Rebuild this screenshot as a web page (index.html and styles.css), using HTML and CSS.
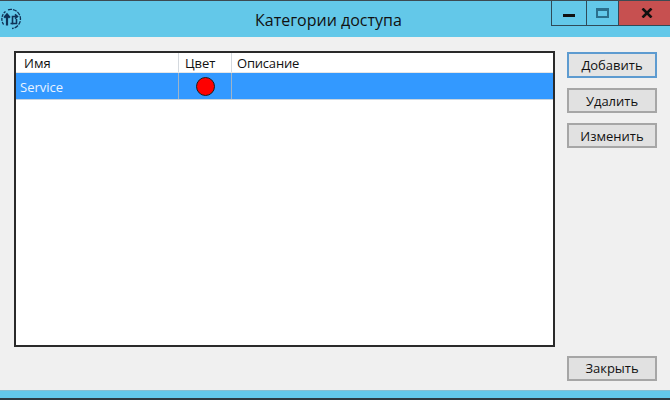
FILE: index.html
```html
<!DOCTYPE html>
<html lang="ru">
<head>
<meta charset="utf-8">
<title>Категории доступа</title>
<link rel="stylesheet" href="styles.css">
</head>
<body>
<div class="window">
  <header class="titlebar">
    <svg class="app-icon" width="22" height="22" viewBox="0 0 22 22" fill="none" stroke="#0f3358">
      <path d="M3.6 16.5 A9.5 9.5 0 0 1 5.5 3.5" stroke-width="1.3" stroke-dasharray="3 1"/>
      <path d="M8 1.8 A9.5 9.5 0 0 1 20.4 10 A9.5 9.5 0 0 1 12 20.5" stroke-width="1.3" stroke-dasharray="4 1"/>
      <path d="M7 17.5V7.5M4.2 9.8 7 6.5l2.8 3.3" stroke-width="2.2"/>
      <path d="M12.5 16.5V8.5H17M15 6.3 17.5 8.5 15 10.7M10.5 15.5h6V11" stroke-width="1.6"/>
    </svg>
    <h1 class="title">Категории доступа</h1>
    <div class="controls">
      <div class="ctl"><span class="min"></span></div>
      <div class="ctl narrow"><span class="max"></span></div>
      <div class="ctl close"><svg width="12" height="10" viewBox="0 0 12 10"><path d="M1.5 .5 10.5 9.5M10.5 .5 1.5 9.5" stroke="#111" stroke-width="2.6"/></svg></div>
    </div>
  </header>
  <main class="content">
    <section class="list">
      <div class="row head">
        <div class="c c1">Имя</div>
        <div class="c c2">Цвет</div>
        <div class="c c3">Описание</div>
      </div>
      <div class="row sel">
        <div class="c c1">Service</div>
        <div class="c c2"><span class="dot"></span></div>
        <div class="c c3"></div>
      </div>
    </section>
    <aside class="side">
      <button class="btn default">Добавить</button>
      <button class="btn">Удалить</button>
      <button class="btn">Изменить</button>
      <button class="btn last">Закрыть</button>
    </aside>
  </main>
  <div class="bottom"></div>
</div>
</body>
</html>
```
FILE: styles.css
```css
html, body { margin: 0; padding: 0; }
body { width: 670px; height: 400px; overflow: hidden; font-family: "Open Sans", "Noto Sans", sans-serif; font-size: 13px; color: #111; }
.window { height: 400px; display: flex; flex-direction: column; background: #f0f0f0; }
.titlebar { height: 37px; flex: none; box-sizing: border-box; border-top: 1px solid #3c4a52; background: #63c8e9; display: flex; align-items: flex-start; position: relative; }
.app-icon { margin: 7px 0 0 0; flex: none; }
.title { position: absolute; left: 255px; top: 9px; margin: 0; font-size: 16px; line-height: 21px; font-weight: 400; color: #111; white-space: nowrap; }
.controls { margin-left: auto; display: flex; height: 25px; }
.ctl { box-sizing: border-box; width: 35px; height: 25px; border: 1px solid #2f4a58; border-top: 0; border-right: 0; display: flex; align-items: center; justify-content: center; }
.ctl.narrow { width: 32px; }
.ctl.close { width: 52px; background: #c75050; padding-left: 5px; }
.min { width: 12px; height: 3px; background: #111; margin-top: 4px; }
.max { box-sizing: border-box; width: 13px; height: 10px; border: 2px solid #2b6f8c; border-top-width: 3px; }
.content { flex: 1; display: flex; padding: 14px 13px 9px 14px; gap: 12px; min-height: 0; }
.list { width: 541px; height: 296px; box-sizing: border-box; background: #fff; border: 2px solid #2a2a2a; flex: none; }
.row { display: flex; }
.head { height: 20px; line-height: 20px; box-sizing: border-box; border-bottom: 1px solid #e6e6e6; }
.sel { height: 27px; line-height: 28px; background: #3399ff; color: #e8f3ff; border-bottom: 1px solid #c8d4de; box-sizing: border-box; }
.c { box-sizing: border-box; border-right: 1px solid #d4d9de; padding-left: 8px; }
.sel .c { border-right-color: #9fb4c8; padding-left: 4px; }
.c1 { width: 163px; }
.c2 { width: 53px; display: flex; justify-content: center; align-items: center; }
.head .c2 { justify-content: flex-start; padding-left: 6px; }
.sel .c2 { padding-left: 0; }
.c3 { flex: 1; border-right: 0; padding-left: 5px; letter-spacing: -0.2px; }
.dot { width: 19px; height: 19px; box-sizing: border-box; border-radius: 50%; background: #fe0000; border: 1px solid #1c1c1c; }
.side { width: 90px; flex: none; display: flex; flex-direction: column; gap: 10px; }
.btn { width: 90px; height: 25px; box-sizing: border-box; padding: 0; margin: 0; font: inherit; color: #111; background: #e1e1e1; border: 2px solid #a6a6a6; }
.btn.default { height: 26px; border-color: #5d9bd0; background: #e4e4e4; margin-top: 1px; }
.btn.last { margin-top: auto; padding-bottom: 1px; }
.bottom { height: 10px; flex: none; box-sizing: border-box; background: #63c8e9; border-top: 1px solid #86bfd2; border-bottom: 2px solid #2e3a40; }
```
